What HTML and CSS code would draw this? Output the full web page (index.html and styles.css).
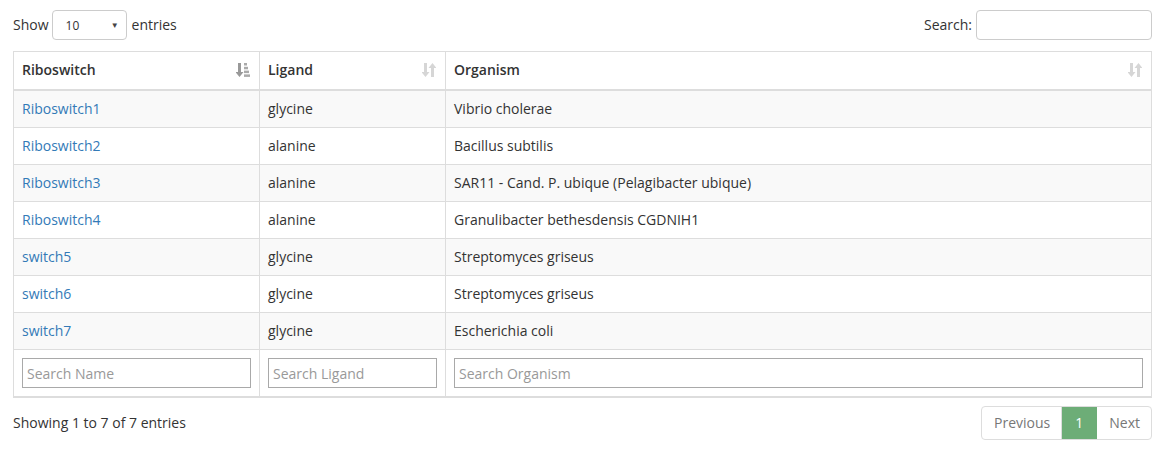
FILE: index.html
```html
<!DOCTYPE html>
<html>
<head>
<meta charset="utf-8">
<link rel="stylesheet" href="styles.css">
</head>
<body>
<div class="wrap">
  <div class="top">
    <label class="length">Show
      <span class="select"><span class="sel-val">10</span><span class="caret">▼</span></span>
      entries</label>
    <label class="search">Search: <span class="search-input"></span></label>
  </div>
  <table class="grid">
    <thead>
      <tr>
        <th class="c1"><div class="th-in"><span>Riboswitch</span>
          <svg class="sort" width="14" height="16" viewBox="0 0 14 16"><path d="M2 1h3v9h2.5L3.5 15 -0.5 10H2z" fill="#999"/><rect x="8" y="1" width="3" height="2.5" fill="#aaa"/><rect x="8" y="4.8" width="4" height="2.5" fill="#aaa"/><rect x="8" y="8.6" width="5" height="2.5" fill="#aaa"/><rect x="8" y="12.4" width="6" height="2.5" fill="#aaa"/></svg></div></th>
        <th class="c2"><div class="th-in"><span>Ligand</span>
          <svg class="sort" width="14" height="16" viewBox="0 0 14 16"><path d="M2 1h3v9h2.5L3.5 15 -0.5 10H2z" fill="#d6d6d6"/><path d="M9 15h3V6h2.5L10.5 1 6.5 6H9z" fill="#d6d6d6"/></svg></div></th>
        <th class="c3"><div class="th-in"><span>Organism</span>
          <svg class="sort" width="14" height="16" viewBox="0 0 14 16"><path d="M2 1h3v9h2.5L3.5 15 -0.5 10H2z" fill="#d6d6d6"/><path d="M9 15h3V6h2.5L10.5 1 6.5 6H9z" fill="#d6d6d6"/></svg></div></th>
      </tr>
    </thead>
    <tbody>
      <tr class="odd"><td><a href="#">Riboswitch1</a></td><td>glycine</td><td>Vibrio cholerae</td></tr>
      <tr><td><a href="#">Riboswitch2</a></td><td>alanine</td><td>Bacillus subtilis</td></tr>
      <tr class="odd"><td><a href="#">Riboswitch3</a></td><td>alanine</td><td>SAR11 - Cand. P. ubique (Pelagibacter ubique)</td></tr>
      <tr><td><a href="#">Riboswitch4</a></td><td>alanine</td><td>Granulibacter bethesdensis CGDNIH1</td></tr>
      <tr class="odd"><td><a href="#">switch5</a></td><td>glycine</td><td>Streptomyces griseus</td></tr>
      <tr><td><a href="#">switch6</a></td><td>glycine</td><td>Streptomyces griseus</td></tr>
      <tr class="odd"><td><a href="#">switch7</a></td><td>glycine</td><td>Escherichia coli</td></tr>
    </tbody>
    <tfoot>
      <tr>
        <td><input class="filter" type="text" placeholder="Search Name"></td>
        <td><input class="filter" type="text" placeholder="Search Ligand"></td>
        <td><input class="filter" type="text" placeholder="Search Organism"></td>
      </tr>
    </tfoot>
  </table>
  <div class="bottom">
    <div class="info">Showing 1 to 7 of 7 entries</div>
    <div class="pager">
      <span class="pg disabled">Previous</span>
      <span class="pg current">1</span>
      <span class="pg disabled">Next</span>
    </div>
  </div>
</div>
</body>
</html>
```
FILE: styles.css
```css
* { box-sizing: border-box; }
body {
  margin: 0;
  font-family: "Open Sans", "Liberation Sans", sans-serif;
  font-size: 14px;
  line-height: 20px;
  color: #333;
  background: #fff;
}
.wrap { padding: 10px 11px 0 13px; }
.top {
  display: flex;
  justify-content: space-between;
  align-items: center;
  height: 30px;
}
.length, .search {
  display: flex;
  align-items: center;
  gap: 4px;
}
.length { gap: 3px; }
.select {
  display: inline-flex;
  align-items: center;
  justify-content: space-between;
  width: 75px;
  height: 30px;
  border: 1px solid #ccc;
  border-radius: 4px;
  padding: 0 7px 0 13px;
  font-size: 12px;
  margin: 0 2px 0 0;
}
.sel-val { padding-top: 2px; }
.caret { font-size: 8px; color: #444; }
.search-input {
  display: inline-block;
  width: 176px;
  height: 30px;
  border: 1px solid #ccc;
  border-radius: 4px;
}
.grid {
  width: 100%;
  margin-top: 11px;
  border-collapse: collapse;
  border: 1px solid #ddd;
}
.grid th, .grid td {
  border: 1px solid #ddd;
  padding: 8px;
  text-align: left;
  vertical-align: middle;
}
.grid thead th {
  border-bottom: 2px solid #ddd;
  font-weight: 600;
  padding-top: 8px;
  padding-bottom: 9px;
}
.c1 { width: 246px; }
.c2 { width: 186px; }
.th-in {
  display: flex;
  justify-content: space-between;
  align-items: center;
}
.sort { display: block; margin-right: 1px; }
.grid tbody tr.odd { background: #f9f9f9; }
.grid a { color: #337ab7; text-decoration: none; }
.grid tfoot tr { border-bottom: 2px solid #ddd; }
.filter {
  display: block;
  width: 100%;
  height: 30px;
  border: 1px solid #a9a9a9;
  padding: 2px 4px;
  font-family: "Open Sans", "Liberation Sans", sans-serif;
  font-size: 14px;
  color: #333;
  background: #fff;
}
.filter::placeholder { color: #999; }
.bottom {
  display: flex;
  justify-content: space-between;
  align-items: center;
  margin-top: 8px;
}
.pager {
  display: flex;
  border: 1px solid #ddd;
  border-radius: 4px;
  overflow: hidden;
}
.pg {
  padding: 6px 11px 6px 12px;
  line-height: 20px;
  color: #777;
}
.pg.current {
  background: #6dad77;
  color: #fff;
  padding: 6px 13px;
}
.pg + .pg { border-left: 1px solid #ddd; }
.pg.current + .pg { border-left-color: #6dad77; }
```
